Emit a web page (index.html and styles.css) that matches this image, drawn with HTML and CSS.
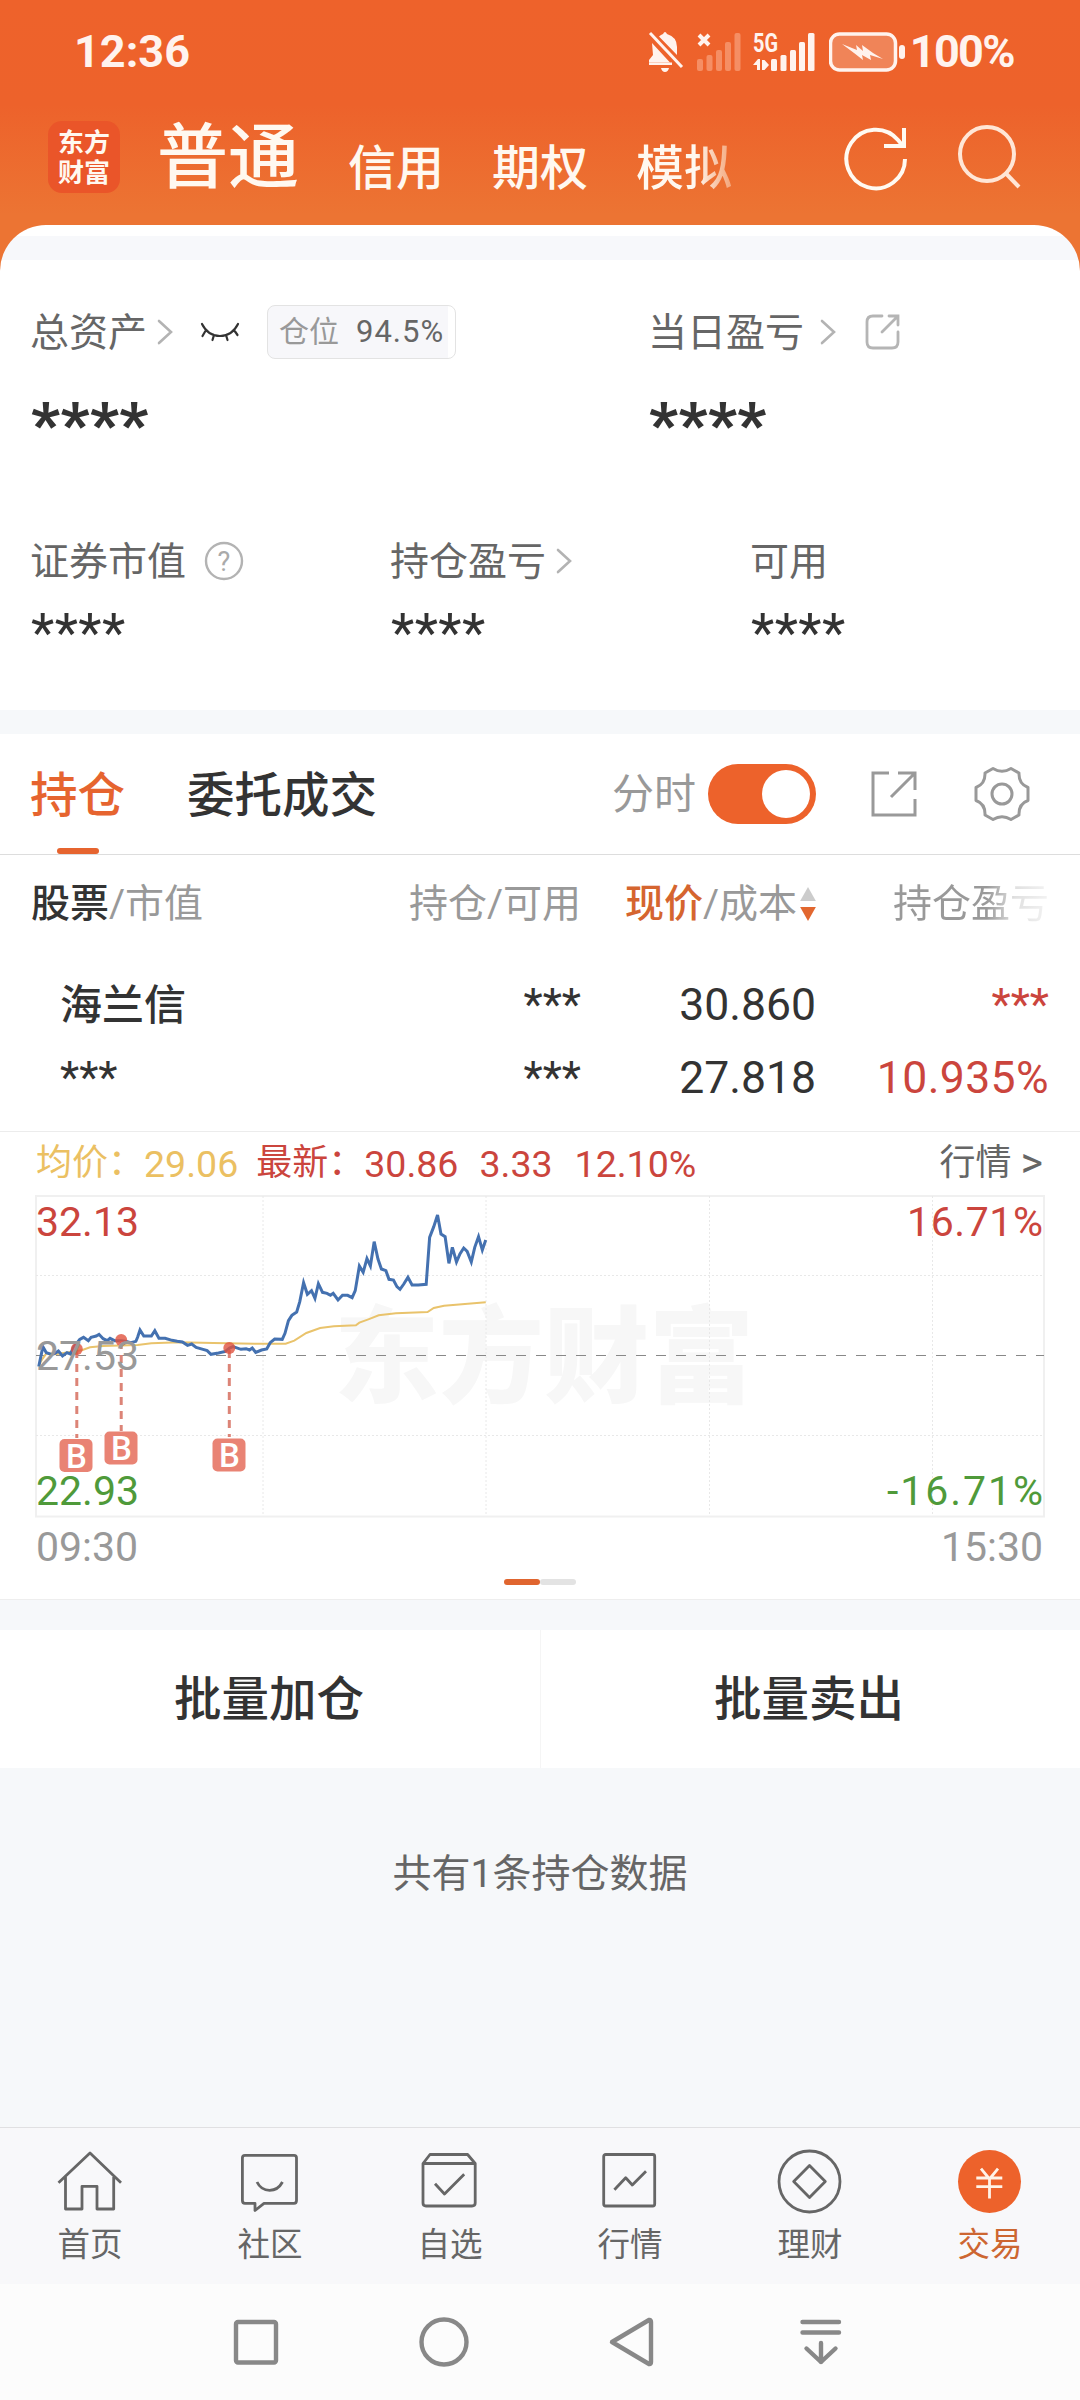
FILE: index.html
```
<!DOCTYPE html>
<html lang="zh-CN">
<head>
  <meta charset="UTF-8" />
  <meta name="viewport" content="width=device-width, initial-scale=1" />
  <title>东方财富 - 交易</title>
  <link rel="stylesheet" href="styles.css">
</head>
<body>
  <header>
    <div class="status-bar">
      <span class="clock">12:36</span>
      <div class="status-icons">
        <svg class="bell" width="36" height="42" viewBox="0 0 36 42">
          <path d="M4 12 L22 31.5 H1 V29 L5 24 Z M11 5.5 Q13 3.5 15 3 Q17 -1 19 3 Q29 6 29 16 V24 Z" fill="#fff3ee"/>
          <path d="M1 31.5 H24 V34 H1 Z M13 37 H21 Q20 41 17 41 Q14 41 13 37 Z" fill="#fff3ee"/>
          <path d="M2 2 L34 36" stroke="#fff3ee" stroke-width="3"/>
        </svg>
        <svg class="signal" width="44" height="40" viewBox="0 0 44 40">
          <path d="M2 3 L12 13 M12 3 L2 13" stroke="#fff3ee" stroke-width="4"/>
          <g fill="#f58e64">
            <rect x="0" y="27" width="6" height="12" rx="2"/>
            <rect x="9.500" y="23" width="6" height="16" rx="2"/>
            <rect x="19" y="18" width="6" height="21" rx="2"/>
            <rect x="28" y="10" width="6" height="29" rx="2"/>
            <rect x="37.500" y="1" width="6" height="38" rx="2"/>
          </g>
        </svg>
        <svg class="signal-5g" width="62" height="40" viewBox="0 0 62 40">
          <text class="net" x="0" y="20" textLength="25" lengthAdjust="spacingAndGlyphs">5G</text>
          <g fill="#fff3ee">
            <path d="M0 33 L5 27 H7 V38 H4 V33 Z M9 28 H11.500 L16 33 L11.500 38 H9 Z"/>
            <rect x="18" y="27" width="6" height="12" rx="1.500"/>
            <rect x="27.500" y="23" width="6" height="16" rx="1.500"/>
            <rect x="37" y="18" width="6" height="21" rx="1.500"/>
            <rect x="46" y="10" width="6" height="29" rx="1.500"/>
            <rect x="55" y="1" width="6.500" height="38" rx="1.500"/>
          </g>
        </svg>
        <svg class="battery" width="78" height="40" viewBox="0 0 78 40">
          <rect x="1.500" y="2" width="65" height="36" rx="9" fill="#f08458" stroke="#fff3ee" stroke-width="3.500"/>
          <path d="M13 12 L28 18 L27 13 L34 19 L33 13 L44 21 L54 27 L41 23 L42 28 L33 23 L34 28 L25 21 Z" fill="#fff3ee"/>
          <rect x="70" y="13" width="6" height="14" rx="3" fill="#fff3ee"/>
        </svg>
        <span class="percent">100%</span>
      </div>
    </div>

    <nav class="account-nav">
      <div class="logo">东方<br>财富</div>
      <div class="accounts">
        <span class="account current">普通</span>
        <span class="account">信用</span>
        <span class="account">期权</span>
        <span class="account fade">模拟</span>
      </div>
      <svg class="icon-refresh" width="66" height="68" viewBox="0 0 66 68" fill="none" stroke="#fffaf2" stroke-width="4">
        <path d="M62 35 A 29.300 29.300 0 1 1 55 16 L60 22"/>
        <path d="M61 4 V22 H41"/>
      </svg>
      <svg class="icon-search" width="66" height="68" viewBox="0 0 66 68" fill="none" stroke="#ffe6d6" stroke-width="4">
        <circle cx="31" cy="31" r="27"/>
        <path d="M49.500 50 L63 64"/>
      </svg>
    </nav>
  </header>

  <main>
    <section class="assets">
      <div class="asset-top">
        <div class="asset-total">
          <div class="line">
            <span class="label">总资产</span>
            <svg class="chevron" width="16" height="26" viewBox="0 0 16 26"><path d="M2 2 L14 13 L2 24"/></svg>
            <svg class="eye" width="40" height="22" viewBox="0 0 40 22" fill="none" stroke="#333" stroke-width="2.200" stroke-linecap="round">
              <path d="M2 3 Q8 15 20 15 Q32 15 38 3 M6 9 L2.500 15 M14 14 L12.500 19 M26 14 L27.500 19 M34 9 L37.500 14"/>
            </svg>
            <span class="badge"><span>仓位</span><b>94.5%</b></span>
          </div>
          <p class="big">****</p>
        </div>
        <div class="asset-today">
          <div class="line">
            <span class="label">当日盈亏</span>
            <svg class="chevron wide" width="16" height="26" viewBox="0 0 16 26"><path d="M2 2 L14 13 L2 24"/></svg>
            <svg class="share" width="36" height="36" viewBox="0 0 36 36" fill="none" stroke="#b5b5b5" stroke-width="2.800" stroke-linecap="round">
              <path d="M17 2 H8 Q2 2 2 8 V28 Q2 34 8 34 H27 Q33 34 33 28 V18 M24 2 H33 V11 M33 2 L17 18"/>
            </svg>
          </div>
          <p class="big">****</p>
        </div>
      </div>
      <div class="asset-bottom">
        <div>
          <div class="line">
            <span class="label">证券市值</span>
            <svg class="help" width="40" height="40" viewBox="0 0 40 40">
              <circle cx="20" cy="20" r="18" fill="none" stroke="#b3b3b3" stroke-width="2.400"/>
              <text x="20" y="29.500" text-anchor="middle">?</text>
            </svg>
          </div>
          <p class="stars">****</p>
        </div>
        <div>
          <div class="line">
            <span class="label">持仓盈亏</span>
            <svg class="chevron" width="16" height="26" viewBox="0 0 16 26"><path d="M2 2 L14 13 L2 24"/></svg>
          </div>
          <p class="stars">****</p>
        </div>
        <div>
          <div class="line"><span class="label">可用</span></div>
          <p class="stars">****</p>
        </div>
      </div>
    </section>

    <section class="positions">
      <div class="tabs">
        <span class="tab active">持仓</span>
        <span class="tab">委托成交</span>
        <span class="switch-label">分时</span>
        <span class="switch"></span>
        <svg class="icon-export" width="46" height="46" viewBox="0 0 46 46" fill="none" stroke="#999" stroke-width="3">
          <path d="M18 2 H2 V44 H44 V28 M27 2 H44 V19 M44 2 L20 26"/>
        </svg>
        <svg class="icon-gear" width="56" height="56" viewBox="0 0 56 56" fill="none" stroke="#999" stroke-width="3" stroke-linejoin="round">
          <path d="M19 2.500 Q28 8 37 2.500 L45 7 Q44.500 18 54 21.500 V34.500 Q44.500 38 45 49 L37 53.500 Q28 48 19 53.500 L11 49 Q11.500 38 2 34.500 V21.500 Q11.500 18 11 7 Z"/>
          <circle cx="28" cy="28" r="10"/>
        </svg>
      </div>

      <div class="columns head">
        <span class="name"><b>股票</b>/市值</span>
        <span>持仓/可用</span>
        <span class="sorted"><em>现价</em>/成本<i class="sort"></i></span>
        <span class="fade-col">持仓盈亏</span>
      </div>
      <div class="holding">
        <div class="columns">
          <span class="name stock">海兰信</span><span>***</span><span>30.860</span><span class="red">***</span>
        </div>
        <div class="columns">
          <span class="name">***</span><span>***</span><span>27.818</span><span class="red ratio">10.935%</span>
        </div>
      </div>

      <div class="quote">
        <span class="avg">均价：</span><span class="avg num">29.06</span>
        <span class="red latest">最新：</span><span class="red num">30.86</span>
        <span class="red num change">3.33</span>
        <span class="red num rate">12.10%</span>
        <span class="more">行情 <i>&gt;</i></span>
      </div>

      <svg class="chart" width="1008" height="323" viewBox="0 0 1008 323">
        <text class="watermark" x="298" y="199">东方财富</text>
        <rect x="0" y="1" width="1008" height="320.500" fill="none" stroke="#f0f0f0" stroke-width="2"/>
        <path class="grid" d="M227 1 V321 M450 1 V321 M673.500 1 V321 M896.500 1 V321 M0 80.500 H1008 M0 240.500 H1008"/>
        <path d="M0 160.500 H1008" stroke="#888" stroke-dasharray="10 10"/>

        <!-- price and average lines -->
        <svg width="1008" height="321" viewBox="105 225 2927 963" preserveAspectRatio="none">
          <polyline class="avg-line" points="113,735 125,715 135,700 160,703 200,697 240,690 262,682 300,678 400,675 440,670 520,667 620,669 740,671 830,671 855,662 890,639 930,624 970,619 1034,616 1044,608 1070,598 1100,586 1150,580 1242,576 1260,564 1290,557 1411,547"/>
          <polyline class="price-line" points="113,740 125,680 135,698 150,703 160,700 170,693 182,708 195,698 205,702 215,680 222,672 232,658 243,652 257,662 265,652 280,648 288,643 300,656 312,662 320,655 333,662 352,662 365,664 380,668 395,664 400,652 407,630 418,648 440,648 450,632 462,655 480,655 500,661 515,664 530,666 545,676 557,672 570,682 590,688 602,692 613,703 635,699 655,694 667,684 677,680 700,688 715,686 725,690 733,684 743,697 760,690 775,687 785,668 798,657 820,658 828,640 838,602 848,586 862,576 871,545 882,488 893,523 905,512 915,535 925,491 937,517 950,520 960,526 968,520 982,540 995,526 1010,526 1023,533 1032,512 1044,438 1055,457 1066,416 1076,438 1087,365 1098,417 1108,447 1121,452 1130,478 1143,480 1153,500 1162,508 1173,492 1185,472 1197,495 1215,495 1238,493 1248,352 1260,320 1271,285 1281,342 1293,350 1304,430 1314,382 1326,426 1336,402 1347,384 1357,394 1369,426 1379,382 1390,350 1401,390 1411,360"/>
        </svg>

        <!-- buy markers -->
        <g class="marker">
          <path d="M40.800 155 V243 M85.200 146 V236 M193.300 155 V242"/>
          <circle cx="40.800" cy="154" r="6"/><circle cx="85.200" cy="145" r="6"/><circle cx="193.300" cy="153" r="6"/>
          <rect x="23.500" y="244" width="33" height="33" rx="5"/>
          <rect x="68.500" y="236.500" width="33" height="33" rx="5"/>
          <rect x="176.500" y="243.500" width="33" height="33" rx="5"/>
          <text x="40.500" y="272.500">B</text><text x="85.500" y="265">B</text><text x="193.500" y="272">B</text>
        </g>

        <g class="axis">
          <text class="up" x="0" y="41">32.13</text>
          <text class="flat" x="0" y="175">27.53</text>
          <text class="down" x="0" y="309.500">22.93</text>
          <text class="up" x="871" y="41" textLength="136">16.71%</text>
          <text class="down" x="851" y="309.500" textLength="156">-16.71%</text>
        </g>
      </svg>
      <div class="times"><span>09:30</span><span>15:30</span></div>
      <div class="pager"><i class="on"></i><i></i></div>
    </section>

    <div class="batch">
      <span>批量加仓</span>
      <span>批量卖出</span>
    </div>

    <p class="summary">共有1条持仓数据</p>
  </main>

  <footer>
    <nav class="tabbar">
      <a class="item">
        <svg width="72" height="72" viewBox="0 0 72 72"><path d="M4.500 36.700 L36 7 L67 36.700 M11.500 31 V63 H28 V40.300 H43 V63 H59.700 V31"/></svg>
        <span>首页</span>
      </a>
      <a class="item">
        <svg width="72" height="72" viewBox="0 0 72 72"><path d="M11 9.300 H60 Q62.500 9.300 62.500 12 V54.500 Q62.500 57.300 60 57.300 H30 L21 64.500 V57.300 H11 Q8.400 57.300 8.400 54.500 V12 Q8.400 9.300 11 9.300 Z M23 36 Q27 44.300 35.600 44.300 Q44 44.300 48.500 36"/></svg>
        <span>社区</span>
      </a>
      <a class="item">
        <svg width="72" height="72" viewBox="0 0 72 72"><path d="M9 17.500 V57 Q9 60 12 60 H58 Q61.200 60 61.200 57 V17.500 L53.600 8.500 H16 Z M9 17.500 H61 M21 37.700 L30.500 48 L50.200 28.300"/></svg>
        <span>自选</span>
      </a>
      <a class="item">
        <svg width="72" height="72" viewBox="0 0 72 72"><rect x="9.700" y="8.500" width="51" height="51.500" rx="2"/><path d="M20.400 43.700 L31.700 31.700 L38.300 39 L52 25.300"/></svg>
        <span>行情</span>
      </a>
      <a class="item">
        <svg width="72" height="72" viewBox="0 0 72 72"><circle cx="35.500" cy="35.500" r="30.500"/><path d="M35.500 19.500 L51.300 35.500 L35.500 51.500 L19.700 35.500 Z"/></svg>
        <span>理财</span>
      </a>
      <a class="item selected">
        <svg width="72" height="72" viewBox="0 0 72 72"><circle cx="35.500" cy="35.500" r="31.500" fill="#ed622b" stroke="none"/><path d="M27 22.700 L35.500 33 L44 22.700 M22.300 32 H48.300 M22.300 40.700 H48.300 M35.500 32 V52.500" stroke="#fff3e8"/></svg>
        <span>交易</span>
      </a>
    </nav>
    <div class="system-nav">
      <svg width="56" height="56" viewBox="0 0 56 56"><rect x="8" y="8" width="40" height="40.500" rx="2"/></svg>
      <svg width="56" height="56" viewBox="0 0 56 56"><circle cx="28" cy="28" r="22.500"/></svg>
      <svg width="56" height="56" viewBox="0 0 56 56"><path d="M8 28 L45 6 Q47 5.500 47 8 V48 Q47 50.500 45 50 Z"/></svg>
      <svg width="56" height="56" viewBox="0 0 56 56"><path d="M10.500 8 H47 M10.500 18.500 H47 M29 29 V48 M14.500 34.500 L29 48 L43.500 34.500"/></svg>
    </div>
  </footer>
</body>
</html>
```
FILE: styles.css
```
* {
  box-sizing: border-box;
}

body {
  margin: 0;
  width: 1080px;
  height: 2400px;
  display: flex;
  flex-direction: column;
  font-family: Roboto, "Noto Sans CJK SC", sans-serif;
  line-height: 1.2;
  background-color: #f6f8fa;
  color: #333;
  overflow: hidden;
}

p {
  margin: 0;
}

svg {
  display: block;
  flex: none;
}

/* Header */
header {
  height: 271px;
  background: linear-gradient(180deg, #ee622b 0, #ed622b 105px, #ec7433 215px, #ec7433 100%);
  color: #fff8f0;
}

.status-bar {
  height: 103px;
  padding: 0 66px 0 74px;
  display: flex;
  align-items: center;
  justify-content: space-between;
  font-size: 45px;
  font-weight: 700;
  color: #fff3ee;
}

.status-icons {
  display: flex;
  align-items: center;
}

.signal {
  margin-left: 13px;
}

.signal-5g {
  margin-left: 12px;
  overflow: visible;
}

.net {
  font-size: 26px;
  font-weight: 700;
  fill: #fff3ee;
}

.battery {
  margin: 0 3px 0 14px;
}

.percent {
  letter-spacing: -1.6px;
}

.account-nav {
  height: 122px;
  padding-left: 48px;
  display: flex;
  align-items: flex-start;
}

.logo {
  width: 72px;
  height: 72px;
  margin-top: 18px;
  padding-top: 5px;
  border-radius: 14px;
  background-color: #ea5529;
  font-family: "Noto Sans CJK SC", sans-serif;
  font-size: 26px;
  font-weight: 700;
  line-height: 30px;
  text-align: center;
}

.accounts {
  width: 680px;
  height: 103px;
  padding-left: 37px;
  display: flex;
  align-items: flex-end;
}

.account {
  font-size: 48px;
  font-weight: 500;
  line-height: 74px;
  margin-right: 48px;
}

.account.current {
  font-size: 71px;
  line-height: 97px;
  margin-right: 49px;
}

.account.fade {
  background: linear-gradient(90deg, #fff8f0 62%, #f3a478 100%);
  -webkit-background-clip: text;
  color: transparent;
}

.icon-refresh {
  margin: 21px 0 0 43px;
}

.icon-search {
  margin: 20px 0 0 47px;
}

/* Assets */
main {
  flex: 1;
  margin-top: -46px;
}

.assets {
  height: 485px;
  padding: 80px 0 0 31px;
  border-radius: 46px 46px 0 0;
  background: linear-gradient(#fff 11px, #f7f8fb 11px, #f7f8fb 35px, #fff 35px);
}

.asset-top {
  display: grid;
  grid-template-columns: 618px 1fr;
  height: 229px;
}

.asset-bottom {
  display: grid;
  grid-template-columns: 360px 360px 1fr;
}

.line {
  height: 54px;
  display: flex;
  align-items: center;
}

.label {
  margin-left: -1px;
  padding-top: 2px;
  font-size: 39px;
  color: #666;
}

.chevron {
  margin-left: 10px;
  fill: none;
  stroke: #b3b3b3;
  stroke-width: 2.6;
  stroke-linecap: round;
}

.chevron.wide {
  margin-left: 16px;
}

.eye {
  margin-left: 27px;
}

.badge {
  width: 189px;
  height: 54px;
  margin-left: 27px;
  padding-left: 11px;
  display: flex;
  align-items: center;
  border: 1px solid #e3e3e3;
  border-radius: 8px;
  background: linear-gradient(90deg, #f7f7fa 180px, #fff 180px);
  font-size: 30px;
  color: #999;
}

.badge b {
  margin: -1px 0 0 17px;
  font-size: 31px;
  font-weight: 400;
  letter-spacing: 1px;
  color: #666;
}

.share {
  margin-left: 29px;
}

.help {
  margin-left: 18px;
}

.help text {
  font-size: 27px;
  fill: #aaa;
}

.big {
  margin-top: 26px;
  font-size: 62px;
  font-weight: 900;
  letter-spacing: 0.6px;
  line-height: 80px;
}

.stars {
  margin-top: 13px;
  font-size: 54px;
  letter-spacing: 0.4px;
  line-height: 64px;
}

/* Positions */
.positions {
  margin-top: 24px;
  height: 866px;
  background-color: #fff;
  border-bottom: 1px solid #eee;
}

.tabs {
  height: 121px;
  padding-left: 30px;
  display: flex;
  align-items: center;
  border-bottom: 1px solid #ddd;
}

.tab {
  height: 120px;
  line-height: 124px;
  font-size: 47.5px;
  font-weight: 500;
}

.tab.active {
  position: relative;
  margin-right: 62px;
  color: #e6642f;
}

.tab.active::after {
  content: "";
  position: absolute;
  left: 27px;
  bottom: 0;
  width: 42px;
  height: 6px;
  border-radius: 3px;
  background-color: #e6642f;
}

.switch-label {
  margin-left: 235px;
  padding-top: 2px;
  font-size: 42px;
  color: #999;
}

.switch {
  width: 108px;
  height: 60px;
  margin-left: 12px;
  padding: 6px;
  border-radius: 30px;
  background-color: #ed622b;
}

.switch::after {
  content: "";
  display: block;
  width: 48px;
  height: 48px;
  margin-left: 48px;
  border-radius: 50%;
  background-color: #fff;
}

.icon-export {
  margin-left: 55px;
}

.icon-gear {
  margin-left: 57px;
}

.columns {
  display: grid;
  grid-template-columns: 250px 300px 235px 233px;
  padding-left: 31px;
  height: 73px;
  align-items: center;
  text-align: right;
  font-size: 44.5px;
}

.columns.head {
  height: 96px;
  padding-top: 2px;
  font-size: 39px;
  color: #999;
}

.columns .name {
  padding-left: 29px;
  text-align: left;
}

.columns.head .name {
  padding-left: 0;
}

.name b {
  font-weight: 500;
  color: #333;
}

.columns .stock {
  padding-top: 2px;
  font-size: 42px;
  font-weight: 500;
}

.columns .ratio {
  letter-spacing: 0.4px;
}

.sorted {
  display: flex;
  align-items: center;
  justify-content: flex-end;
}

.sorted em {
  font-style: normal;
  font-weight: 500;
  color: #d5652f;
}

.sort {
  width: 16px;
  height: 34px;
  margin-left: 3px;
  background: linear-gradient(#ccc 14px, transparent 14px, transparent 20px, #e2672f 20px);
  clip-path: polygon(50% 0, 100% 42%, 100% 58%, 50% 100%, 0 58%, 0 42%);
}

.fade-col {
  background: linear-gradient(90deg, #999 60%, #e0e0e0 78%, #f3f3f3 100%) right / 156px 100% no-repeat;
  -webkit-background-clip: text;
  color: transparent;
}

.holding {
  height: 181px;
  padding: 18px 0 16px;
  border-bottom: 1px solid #ececec;
}

.red {
  color: #cb453d;
}

.quote {
  height: 63px;
  padding: 1px 37px 0 36px;
  display: flex;
  align-items: center;
  font-size: 36px;
}

.quote .num {
  font-size: 37.5px;
}

.avg {
  color: #ebc062;
}

.latest {
  margin-left: 18px;
}

.change {
  margin-left: 21px;
}

.rate {
  margin-left: 22px;
}

.more {
  margin-left: auto;
  color: #666;
}

.more i {
  font-size: 43px;
  font-style: normal;
  line-height: 36px;
  vertical-align: -2px;
}

/* Chart */
.chart {
  margin: 0 36px;
  overflow: visible;
}

.watermark {
  font-family: "Noto Sans CJK SC", sans-serif;
  font-size: 105px;
  font-weight: 900;
  fill: #f7f7f7;
}

.grid {
  stroke: #e8e8e8;
  stroke-dasharray: 2 2;
}

.avg-line,
.price-line {
  fill: none;
  stroke: #e9c36c;
  stroke-width: 2;
  vector-effect: non-scaling-stroke;
}

.price-line {
  stroke: #4471b0;
  stroke-width: 3;
}

.marker path {
  fill: none;
  stroke: #dc8477;
  stroke-width: 3;
  stroke-dasharray: 8 6;
}

.marker circle {
  fill: #e0523f;
  fill-opacity: 0.8;
}

.marker rect {
  fill: #e98374;
}

.marker text {
  font-size: 33px;
  font-weight: 500;
  text-anchor: middle;
  fill: #fff;
}

.axis {
  font-size: 41px;
}

.up {
  fill: #cb453d;
}

.flat {
  fill: #999;
}

.down {
  fill: #4f9a3a;
}

.times {
  height: 59px;
  padding: 0 37px 0 36px;
  display: flex;
  align-items: center;
  justify-content: space-between;
  font-size: 41px;
  color: #999;
}

.pager {
  display: flex;
  justify-content: center;
  padding-top: 2px;
}

.pager i {
  width: 36px;
  height: 6px;
  border-radius: 3px;
  background-color: #e3e3e3;
}

.pager .on {
  background-color: #e0652f;
}

.batch {
  height: 138px;
  margin-top: 30px;
  padding-top: 3px;
  display: grid;
  grid-template-columns: 538px 542px;
  align-items: center;
  background: linear-gradient(#f5f5f5, #f5f5f5) center / 1px 100% no-repeat #fff;
  text-align: center;
  font-size: 47.5px;
  font-weight: 500;
}

.summary {
  margin-top: 76px;
  line-height: 60px;
  text-align: center;
  font-size: 39px;
  color: #666;
}

/* Bottom bars */
.tabbar {
  height: 157px;
  padding-top: 18px;
  display: grid;
  grid-template-columns: repeat(6, 180px);
  border-top: 1px solid #e0e0e2;
  background-color: #f8f8fa;
}

.item {
  display: flex;
  flex-direction: column;
  align-items: center;
  color: #666;
  font-size: 32.5px;
  line-height: 40px;
}

.item svg {
  fill: none;
  stroke: #666;
  stroke-width: 2.8;
  stroke-linejoin: round;
  margin-bottom: 7px;
}

.item.selected {
  color: #cd6631;
}

.system-nav {
  height: 116px;
  padding-left: 162px;
  display: grid;
  grid-template-columns: repeat(4, 188px);
  align-items: center;
  justify-items: center;
  background-color: #fcfcfc;
}

.system-nav svg {
  fill: none;
  stroke: #888;
  stroke-width: 4.4;
  stroke-linecap: round;
  stroke-linejoin: round;
}
```
